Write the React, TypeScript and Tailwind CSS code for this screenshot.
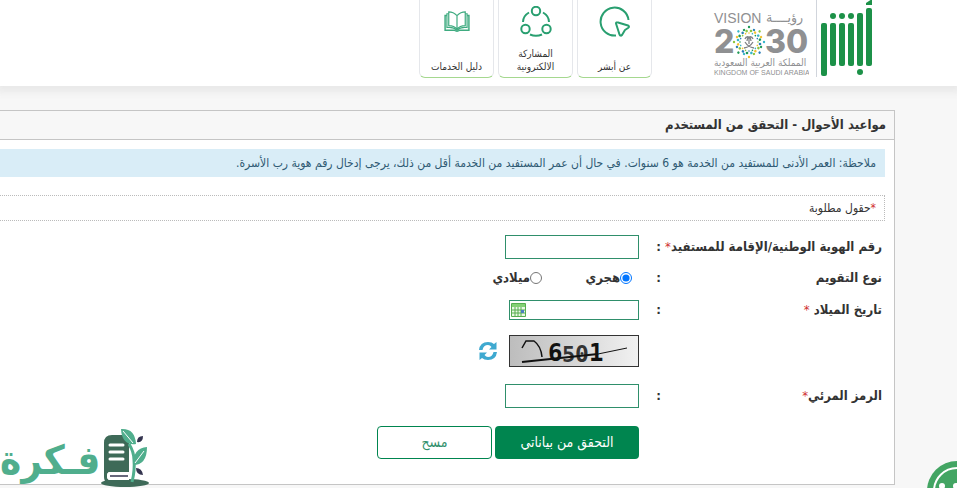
import { ReactNode } from "react";
import clsx from "clsx";

const AbsherLogo = () => (
  <svg width="54" height="78" viewBox="0 0 54 78" fill="#1c9148" aria-label="أبشر" role="img">
    <rect x="0" y="23" width="6" height="53" rx="2" />
    <rect x="9" y="23" width="6" height="43" rx="2" />
    <rect x="18" y="23" width="6" height="43" rx="2" />
    <rect x="27" y="23" width="6" height="43" rx="2" />
    <rect x="36" y="13" width="6" height="53" rx="2" />
    <rect x="45" y="8" width="6" height="58" rx="2" />
    <path d="M45 5V3l6-4v6z" />
    <circle cx="12" cy="16" r="3" />
    <circle cx="21" cy="16" r="3" />
    <circle cx="30" cy="16" r="3" />
    <circle cx="39" cy="72" r="3" />
  </svg>
);

const dots = Array.from({ length: 16 }, (_, i) => i);
const dotColors = ["#1f9a57", "#2c7fb8", "#8cc63f", "#f2c230", "#35b6c9"];

const VisionLogo = () => (
  <svg width="96" height="78" viewBox="0 0 96 78" direction="ltr" fill="#8f9092">
    <text x="1" y="23" fontFamily="Liberation Sans" fontSize="14">VISION</text>
    <text x="53" y="22" fontFamily="DejaVu Sans Condensed, DejaVu Sans" fontSize="14">رؤيــــة</text>
    <text x="1" y="53" fontFamily="Inter" fontSize="32" fontWeight="800">2</text>
    <text x="52" y="53" fontFamily="Inter" fontSize="32" fontWeight="800">30</text>
    <g transform="translate(36 42)">
      {dots.map((i) => (
        <g key={i} transform={`rotate(${i * 22.5})`}>
          <circle cy={i % 2 ? -13 : -15} r="1.2" fill={dotColors[i % 5]} />
          <circle cx="2" cy="-11" r="1.3" fill={dotColors[(i + 2) % 5]} />
          <circle cy="-9" r="0.8" fill={dotColors[(i + 3) % 5]} />
        </g>
      ))}
      <path
        d="M0-5V2M0-5q-3-1-4 2M0-5q3-1 4 2M0-5q-2 1-2 4M0-5q2 1 2 4M-5 6q6-1 9-6M5 6q-6-1-9-6"
        fill="none"
        stroke="#808285"
        strokeWidth="1.3"
      />
    </g>
    <text x="1" y="66" fontFamily="DejaVu Sans Condensed, DejaVu Sans" fontSize="10">المملكة العربية السعودية</text>
    <text x="1" y="75" fontFamily="Liberation Sans" fontSize="7">KINGDOM OF SAUDI ARABIA</text>
  </svg>
);

const CursorIcon = () => (
  <svg width="32" height="32" viewBox="0 0 32 32" fill="none" stroke="#299f70" strokeWidth="2">
    <path d="M17 29.500a14 14 0 1 1 12.500-15.500" />
    <path d="M17 17.500q0-1.500 2-1l10 3q2 1 0 2.500l-3 2-3 5q-1.500 1.500-2.500-.5z" strokeLinejoin="round" />
  </svg>
);

const ShareIcon = () => (
  <svg width="32" height="32" viewBox="0 0 32 32" fill="none" stroke="#299f70" strokeWidth="2">
    <circle cx="16" cy="5" r="4.200" />
    <circle cx="5.500" cy="23" r="4.200" />
    <circle cx="26.500" cy="23" r="4.200" />
    <path d="M9 6.500Q3 10 3 16M23 6.500Q29 10 29 16M10 28.500q6 2.500 12 0" />
  </svg>
);

const BookIcon = () => (
  <svg width="26" height="22" viewBox="0 0 28 24" fill="none" stroke="#3fab80" strokeWidth="1.300">
    <path d="M14 5Q10 1 5 1v15q6 0 9 4 3-4 9-4V1q-5 0-9 4zM14 5v15" />
    <path d="M5 3H3v15q7-1 11 3 4-4 11-3V3h-2" />
    <path d="M3 5H1v16h10q3 2 6 0h10V5h-2" strokeWidth="1.600" />
  </svg>
);

const CalendarIcon = () => (
  <svg width="15" height="14" viewBox="0 0 15 14">
    <rect width="15" height="14" rx="1" fill="#57ad4f" />
    <rect x="1" y="1" width="13" height="3" fill="#83d074" />
    <rect x="1" y="4" width="13" height="9" fill="#e9f7e4" />
    <path d="M1 7h13M1 10h13M4 4v9M7 4v9M10 4v9" stroke="#57ad4f" />
    <rect x="10" y="7" width="3" height="3" fill="#4a7fc0" />
  </svg>
);

const RefreshIcon = () => (
  <svg width="18" height="18" viewBox="0 0 18 18" fill="#3fa9d0">
    <path d="M0 8Q1 0 9 0q4 0 6 2l2.500-2v7.500H10l2.500-2.500Q11 3 9 3 4.500 3 3.500 8z" />
    <path d="M18 10q-1 8-9 8-4 0-6-2L.5 18v-7.500H8L5.500 13Q7 15 9 15q4.500 0 5.500-5z" />
  </svg>
);

const Captcha = () => (
  <svg width="130" height="32" viewBox="0 0 128 30" direction="ltr" className="border border-[#333]">
    <defs>
      <linearGradient id="noise">
        <stop offset="0" stopColor="#bdbdbd" />
        <stop offset="0.500" stopColor="#d6d6d6" />
        <stop offset="1" stopColor="#f1f1f1" />
      </linearGradient>
    </defs>
    <rect width="128" height="30" fill="url(#noise)" />
    <g fontFamily="DejaVu Sans Mono" fontWeight="700" fill="#111">
      <text x="38" y="25" fontSize="24">6</text>
      <text x="52" y="26" fontSize="22" fill="#333">5</text>
      <text x="65" y="26" fontSize="23" fill="#333">0</text>
      <text x="79" y="25" fontSize="24">1</text>
    </g>
    <path d="M12 12l4-7h8q7 5 8 16" fill="none" stroke="#111" strokeWidth="1.500" />
    <path d="M12 26L88 18" stroke="#111" strokeWidth="2" />
    <path d="M88 18l29-6" stroke="#111" />
  </svg>
);

const FikraLogo = () => (
  <svg width="48" height="60" viewBox="0 0 48 60">
    <ellipse cx="24" cy="55" rx="24" ry="4" fill="#3e6a58" />
    <path d="M3 49V15q0-8 8-8h17v37H9q-3 0-3 4t3 4h20v3H7q-4-1-4-6z" fill="#3e6a58" />
    <path d="M28 44H9q-3 0-3 4t3 4h19z" fill="#fff" />
    <path d="M9 17h13M9 24h13M9 31h13" stroke="#fff" strokeWidth="3" strokeLinecap="round" />
    <path d="M9 48h18" stroke="#34344f" strokeWidth="1.500" />
    <path d="M31 54q3-12 2-22 0-8-5-16" fill="none" stroke="#50ae8d" strokeWidth="3" />
    <path d="M20 1q14-1 15 15-14 2-15-15zM32 37q0-17 14-18 0 18-14 18z" fill="#50ae8d" />
    <path d="M22 3l10 12M34 35l9-12" stroke="#fff" />
    <path d="M36 14q0-6 6-6 0 7-6 6zM35 40q6 0 7 7-7 0-7-7z" fill="#34344f" />
  </svg>
);

const ChatIcon = () => (
  <svg width="60" height="60" viewBox="0 0 60 60">
    <circle cx="30" cy="30" r="30" fill="#43a563" />
    <circle cx="30" cy="30" r="23" fill="none" stroke="#fff" strokeWidth="2" />
    <circle cx="15" cy="25" r="3" fill="#fff" />
    <circle cx="29" cy="25" r="3" fill="#fff" />
  </svg>
);

const links = [
  { label: "عن أبشر", icon: <CursorIcon /> },
  { label: "المشاركة الالكترونية", icon: <ShareIcon /> },
  { label: "دليل الخدمات", icon: <BookIcon /> },
];

const Star = () => <span className="font-normal text-[#d03030]">*</span>;

type RowProps = {
  label: ReactNode;
  htmlFor?: string;
  className: string;
  children: ReactNode;
};

const Row = ({ label, htmlFor, className, children }: RowProps) => (
  <div className={clsx("flex items-center", className)}>
    <label htmlFor={htmlFor} className="w-[221px] whitespace-nowrap">
      {label}
    </label>
    <span className="w-[22px]">:</span>
    {children}
  </div>
);

const App = () => {
  return (
    <div
      dir="rtl"
      className="relative min-h-screen overflow-hidden bg-[#f7f7f7] font-['DejaVu_Sans_Condensed','DejaVu_Sans',sans-serif] text-[#333]"
    >
      <header className="flex h-[86px] items-start bg-white ps-[82px] shadow-[0_2px_8px_4px_#e8e8e8]">
        <AbsherLogo />
        <div className="ms-1 h-[77px] w-px bg-gray-300" />
        <div className="ms-[7px]">
          <VisionLogo />
        </div>
        <nav className="ms-[61px] flex gap-1">
          {links.map((link) => (
            <a
              key={link.label}
              href="#"
              className="flex h-[78px] w-[75px] flex-col items-center justify-between rounded-b-md border-x border-b border-gray-200 border-b-[#a5d88f] px-1 pt-[6px] pb-1 text-center text-[10px] leading-[13px] text-[#333]"
            >
              <span className="flex h-8 items-center">{link.icon}</span>
              <span>{link.label}</span>
            </a>
          ))}
        </nav>
      </header>

      <main className="ms-[62px] mt-6 border border-e-0 border-[#c5c5c5] bg-white pb-[25px]">
        <h1 className="border-b border-[#c5c5c5] bg-[#f7f7f7] px-2 text-[13px] leading-[28px] font-bold">
          مواعيد الأحوال - التحقق من المستخدم
        </h1>
        <p className="ms-[9px] mt-[9px] bg-[#d9edf7] px-[9px] text-[12px] leading-[28px] text-[#2f5a73]">
          ملاحظة: العمر الأدنى للمستفيد من الخدمة هو 6 سنوات. في حال أن عمر المستفيد من الخدمة أقل من ذلك، يرجى إدخال رقم هوية رب الأسرة.
        </p>
        <p className="ms-[9px] mt-[18px] border border-e-0 border-s border-dotted border-[#bbb] px-2 text-[12px] leading-6">
          <Star />
          حقول مطلوبة
        </p>

        <form className="ms-3 mt-[14px] text-[13px] font-bold" onSubmit={(e) => e.preventDefault()}>
          <Row label={<>رقم الهوية الوطنية/الإقامة للمستفيد<Star /></>} htmlFor="identity" className="h-6">
            <input id="identity" type="text" className="h-6 w-[134px] border border-[#2f8f6b] bg-white px-1 outline-none" />
          </Row>
          <Row label="نوع التقويم" className="mt-[7px] h-6">
            <label className="ms-[7px] flex w-[90px] items-center">
              <input type="radio" name="calendar" defaultChecked className="size-3" />
              هجري
            </label>
            <label className="flex items-center">
              <input type="radio" name="calendar" className="size-3" />
              ميلادي
            </label>
          </Row>
          <Row label={<>تاريخ الميلاد <Star /></>} htmlFor="birth" className="mt-[8px] h-6">
            <div className="flex h-5 w-[130px] items-center border border-[#2f8f6b] bg-white pe-px">
              <input id="birth" type="text" className="w-full min-w-0 outline-none" />
              <button type="button" aria-label="التقويم">
                <CalendarIcon />
              </button>
            </div>
          </Row>
          <div className="ms-[243px] mt-[13px] flex items-center">
            <Captcha />
            <button type="button" aria-label="تحديث" className="ms-3">
              <RefreshIcon />
            </button>
          </div>
          <Row label={<>الرمز المرئي<Star /></>} htmlFor="code" className="mt-[17px] h-6">
            <input id="code" type="text" className="h-6 w-[134px] border border-[#2f8f6b] bg-white px-1 outline-none" />
          </Row>
          <div className="ms-[243px] mt-[18px] flex gap-[3px] text-[14px] font-normal">
            <button type="submit" className="h-[33px] w-36 rounded bg-[#00854f] text-white">
              التحقق من بياناتي
            </button>
            <button type="reset" className="h-[33px] w-[115px] rounded border border-[#00854f] bg-white text-[#2f8f6b]">
              مسح
            </button>
          </div>
        </form>
      </main>

      <div className="absolute bottom-0 left-0 flex items-end gap-px" dir="ltr">
        <span className="text-[40px] leading-[56px] font-bold whitespace-nowrap text-[#50ae8d]">فـكرة</span>
        <FikraLogo />
      </div>
      <button type="button" aria-label="محادثة" className="absolute -right-[30px] -bottom-[33px]">
        <ChatIcon />
      </button>
    </div>
  );
};

export default App;
